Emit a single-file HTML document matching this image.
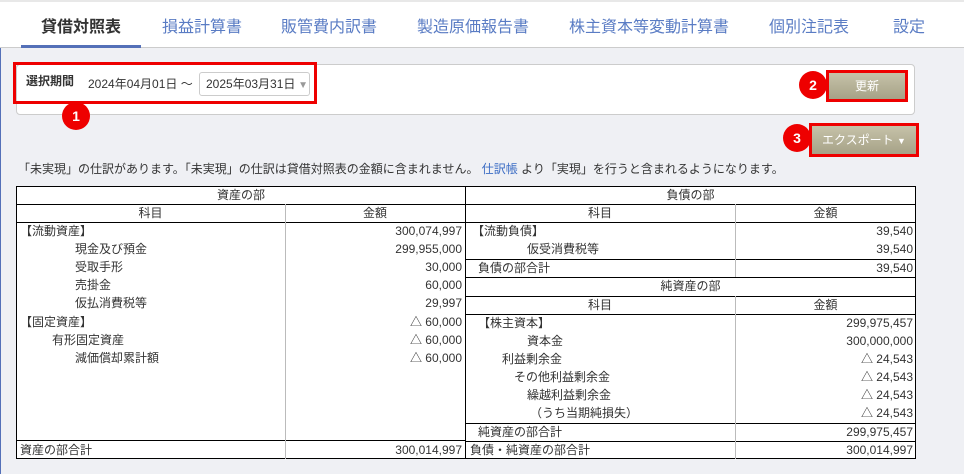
<!DOCTYPE html>
<html><head><meta charset="utf-8"><style>
*{margin:0;padding:0;box-sizing:border-box}
body{width:964px;height:474px;background:#eff0f4;font-family:"Liberation Sans","Noto Sans CJK JP",sans-serif;color:#333;position:relative;overflow:hidden}
.a{position:absolute}
.top{left:0;top:0;width:964px;height:48px;background:#fff;border-bottom:1px solid #ccc;border-top:2px solid #e8e8e8}
.tab{top:13px;font-size:16px;color:#5a7cc4;white-space:nowrap}
.circ{width:28px;height:28px;border-radius:50%;background:#e00;color:#fff;font-weight:bold;font-size:14px;text-align:center;line-height:28px}
.btn{background:linear-gradient(#c6c2a9,#a6a287);color:#fff;font-size:12px;text-align:center;border:3px solid #e00}
.t{font-size:12px;white-space:nowrap;line-height:18px;height:18px}
.r{text-align:right}
.hl{height:1px;background:#000}
.vl{width:1px;background:#bbb}
</style></head><body>
<div class="a top"></div>
<div class="a tab" style="left:41px;color:#333;font-weight:bold">貸借対照表</div>
<div class="a" style="left:21px;top:45px;width:120px;height:3px;background:#5470b8"></div>
<div class="a tab" style="left:162px">損益計算書</div>
<div class="a tab" style="left:281px">販管費内訳書</div>
<div class="a tab" style="left:417px">製造原価報告書</div>
<div class="a tab" style="left:569px">株主資本等変動計算書</div>
<div class="a tab" style="left:769px">個別注記表</div>
<div class="a tab" style="left:893px">設定</div>
<div class="a" style="left:0;top:48px;width:1px;height:426px;background:#5470b8"></div>

<div class="a" style="left:16px;top:64px;width:899px;height:51px;background:#fff;border:1px solid #ccc;border-radius:4px"></div>
<div class="a" style="left:13px;top:62px;width:304px;height:42px;border:3px solid #e00"></div>
<div class="a" style="left:26px;top:72px;font-size:12px;font-weight:bold">選択期間</div>
<div class="a" style="left:88px;top:75px;font-size:12px">2024年04月01日 ～</div>
<div class="a" style="left:199px;top:72px;width:111px;height:24px;border:1px solid #ccc;border-radius:3px;background:#fff;font-size:12px;line-height:22px;padding-left:6px">2025年03月31日<span style="color:#999;font-size:10px"> ▼</span></div>
<div class="a circ" style="left:62px;top:102px">1</div>

<div class="a btn" style="left:826px;top:70px;width:82px;height:32px;line-height:26px">更新</div>
<div class="a circ" style="left:799px;top:71px">2</div>
<div class="a btn" style="left:809px;top:123px;width:110px;height:34px;line-height:28px">エクスポート <span style="font-size:9px">▼</span></div>
<div class="a circ" style="left:783px;top:124px">3</div>

<div class="a" style="left:18px;top:160px;font-size:12px;white-space:nowrap">「未実現」の仕訳があります。「未実現」の仕訳は貸借対照表の金額に含まれません。 <span style="color:#3b6cc4">仕訳帳</span> より「実現」を行うと含まれるようになります。</div>

<!-- table -->
<div class="a" style="left:16px;top:186px;width:900px;height:273px;background:#fff;border:1px solid #000"></div>
<div class="a" style="left:465px;top:186px;width:1px;height:273px;background:#000"></div>
<!-- left lines -->
<div class="a hl" style="left:16px;top:204px;width:450px"></div>
<div class="a hl" style="left:16px;top:222px;width:450px"></div>
<div class="a hl" style="left:16px;top:440px;width:450px"></div>
<div class="a vl" style="left:285px;top:204px;height:255px"></div>
<!-- right lines -->
<div class="a hl" style="left:465px;top:204px;width:451px"></div>
<div class="a hl" style="left:465px;top:222px;width:451px"></div>
<div class="a hl" style="left:465px;top:259px;width:451px"></div>
<div class="a hl" style="left:465px;top:277px;width:451px"></div>
<div class="a hl" style="left:465px;top:296px;width:451px"></div>
<div class="a hl" style="left:465px;top:314px;width:451px"></div>
<div class="a hl" style="left:465px;top:423px;width:451px"></div>
<div class="a hl" style="left:465px;top:441px;width:451px"></div>
<div class="a vl" style="left:735px;top:204px;height:73px"></div>
<div class="a vl" style="left:735px;top:296px;height:163px"></div>

<div class="a t" style="left:16px;top:186px;width:450px;text-align:center">資産の部</div>
<div class="a t" style="left:16px;top:204px;width:269px;text-align:center">科目</div>
<div class="a t" style="left:285px;top:204px;width:180px;text-align:center">金額</div>
<div class="a t" style="left:20px;top:222px">【流動資産】</div><div class="a t r" style="left:285px;top:222px;width:177px">300,074,997</div>
<div class="a t" style="left:75px;top:240px">現金及び預金</div><div class="a t r" style="left:285px;top:240px;width:177px">299,955,000</div>
<div class="a t" style="left:75px;top:258px">受取手形</div><div class="a t r" style="left:285px;top:258px;width:177px">30,000</div>
<div class="a t" style="left:75px;top:276px">売掛金</div><div class="a t r" style="left:285px;top:276px;width:177px">60,000</div>
<div class="a t" style="left:75px;top:294px">仮払消費税等</div><div class="a t r" style="left:285px;top:294px;width:177px">29,997</div>
<div class="a t" style="left:20px;top:313px">【固定資産】</div><div class="a t r" style="left:285px;top:313px;width:177px">△ 60,000</div>
<div class="a t" style="left:52px;top:331px">有形固定資産</div><div class="a t r" style="left:285px;top:331px;width:177px">△ 60,000</div>
<div class="a t" style="left:75px;top:349px">減価償却累計額</div><div class="a t r" style="left:285px;top:349px;width:177px">△ 60,000</div>
<div class="a t" style="left:20px;top:441px">資産の部合計</div><div class="a t r" style="left:285px;top:441px;width:177px">300,014,997</div>

<div class="a t" style="left:465px;top:186px;width:451px;text-align:center">負債の部</div>
<div class="a t" style="left:465px;top:204px;width:270px;text-align:center">科目</div>
<div class="a t" style="left:735px;top:204px;width:181px;text-align:center">金額</div>
<div class="a t" style="left:472px;top:222px">【流動負債】</div><div class="a t r" style="left:735px;top:222px;width:178px">39,540</div>
<div class="a t" style="left:527px;top:240px">仮受消費税等</div><div class="a t r" style="left:735px;top:240px;width:178px">39,540</div>
<div class="a t" style="left:478px;top:259px">負債の部合計</div><div class="a t r" style="left:735px;top:259px;width:178px">39,540</div>
<div class="a t" style="left:465px;top:277px;width:451px;text-align:center">純資産の部</div>
<div class="a t" style="left:465px;top:296px;width:270px;text-align:center">科目</div>
<div class="a t" style="left:735px;top:296px;width:181px;text-align:center">金額</div>
<div class="a t" style="left:478px;top:314px">【株主資本】</div><div class="a t r" style="left:735px;top:314px;width:178px">299,975,457</div>
<div class="a t" style="left:527px;top:332px">資本金</div><div class="a t r" style="left:735px;top:332px;width:178px">300,000,000</div>
<div class="a t" style="left:502px;top:350px">利益剰余金</div><div class="a t r" style="left:735px;top:350px;width:178px">△ 24,543</div>
<div class="a t" style="left:514px;top:368px">その他利益剰余金</div><div class="a t r" style="left:735px;top:368px;width:178px">△ 24,543</div>
<div class="a t" style="left:527px;top:386px">繰越利益剰余金</div><div class="a t r" style="left:735px;top:386px;width:178px">△ 24,543</div>
<div class="a t" style="left:530px;top:404px">（うち当期純損失）</div><div class="a t r" style="left:735px;top:404px;width:178px">△ 24,543</div>
<div class="a t" style="left:478px;top:423px">純資産の部合計</div><div class="a t r" style="left:735px;top:423px;width:178px">299,975,457</div>
<div class="a t" style="left:470px;top:441px">負債・純資産の部合計</div><div class="a t r" style="left:735px;top:441px;width:178px">300,014,997</div>
</body></html>
